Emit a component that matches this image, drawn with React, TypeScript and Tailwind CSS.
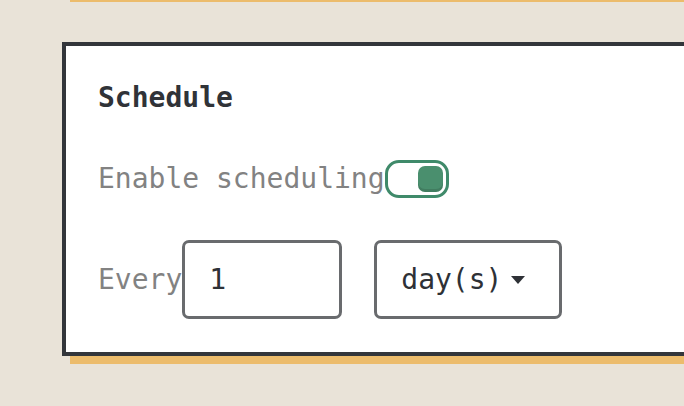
import {useState} from 'react';

const mono = {fontFamily: '"DejaVu Sans Mono", "Liberation Mono", monospace'};

function Toggle({on, onChange}: {on: boolean; onChange: (v: boolean) => void}) {
  return (
    <button
      type="button"
      role="switch"
      aria-checked={on}
      onClick={() => onChange(!on)}
      className={`flex h-[38px] w-[64px] items-center rounded-[14px] border-[3px] border-[#3f8a6a] bg-white p-[3px] ${
        on ? 'justify-end' : 'justify-start'
      }`}
    >
      <span className="block h-[26px] w-[25px] rounded-[7px] bg-[#4a8f6e] shadow-[inset_0_-3px_0_rgba(0,0,0,0.12)]" />
    </button>
  );
}

export default function App() {
  const [enabled, setEnabled] = useState(true);
  const [every, setEvery] = useState('1');

  return (
    <div className="h-[406px] w-[684px] overflow-hidden bg-[#e9e3d8] pl-[62px]" style={mono}>
      {/* previous card, only its shadow peeks in */}
      <div className="-mt-[26px] h-[20px] w-[700px] border-4 border-[#33363b] bg-white shadow-[8px_8px_0_#ecbc6c]" />

      <section className="mt-[48px] h-[314px] w-[700px] border-4 border-[#33363b] bg-white pl-8 pt-[38px] shadow-[8px_8px_0_#ecbc6c]">
        <h3 className="text-[28px] font-bold leading-[28px] text-[#303338]">Schedule</h3>

        <div className="mt-[48px] flex items-center">
          <span className="text-[28px] leading-[28px] text-[#828282]">Enable scheduling</span>
          <Toggle on={enabled} onChange={setEnabled} />
        </div>

        <div className="mt-[42px] flex items-center">
          <span className="text-[28px] leading-[28px] text-[#828282]">Every</span>
          <input
            value={every}
            onChange={(e) => setEvery(e.target.value)}
            className="h-[79px] w-[160px] rounded-[7px] border-[3px] border-[#696b6e] px-6 text-[28px] leading-[28px] text-[#2e3136] outline-none"
          />
          <button
            type="button"
            className="ml-8 flex h-[79px] w-[188px] items-center rounded-[7px] border-[3px] border-[#696b6e] px-6 text-[28px] leading-[28px] text-[#2e3136]"
          >
            day(s)
            <svg className="ml-[9px]" width="14" height="8" viewBox="0 0 14 8">
              <path d="M0 0h14L7 8z" fill="#2e3136" />
            </svg>
          </button>
        </div>
      </section>
    </div>
  );
}
